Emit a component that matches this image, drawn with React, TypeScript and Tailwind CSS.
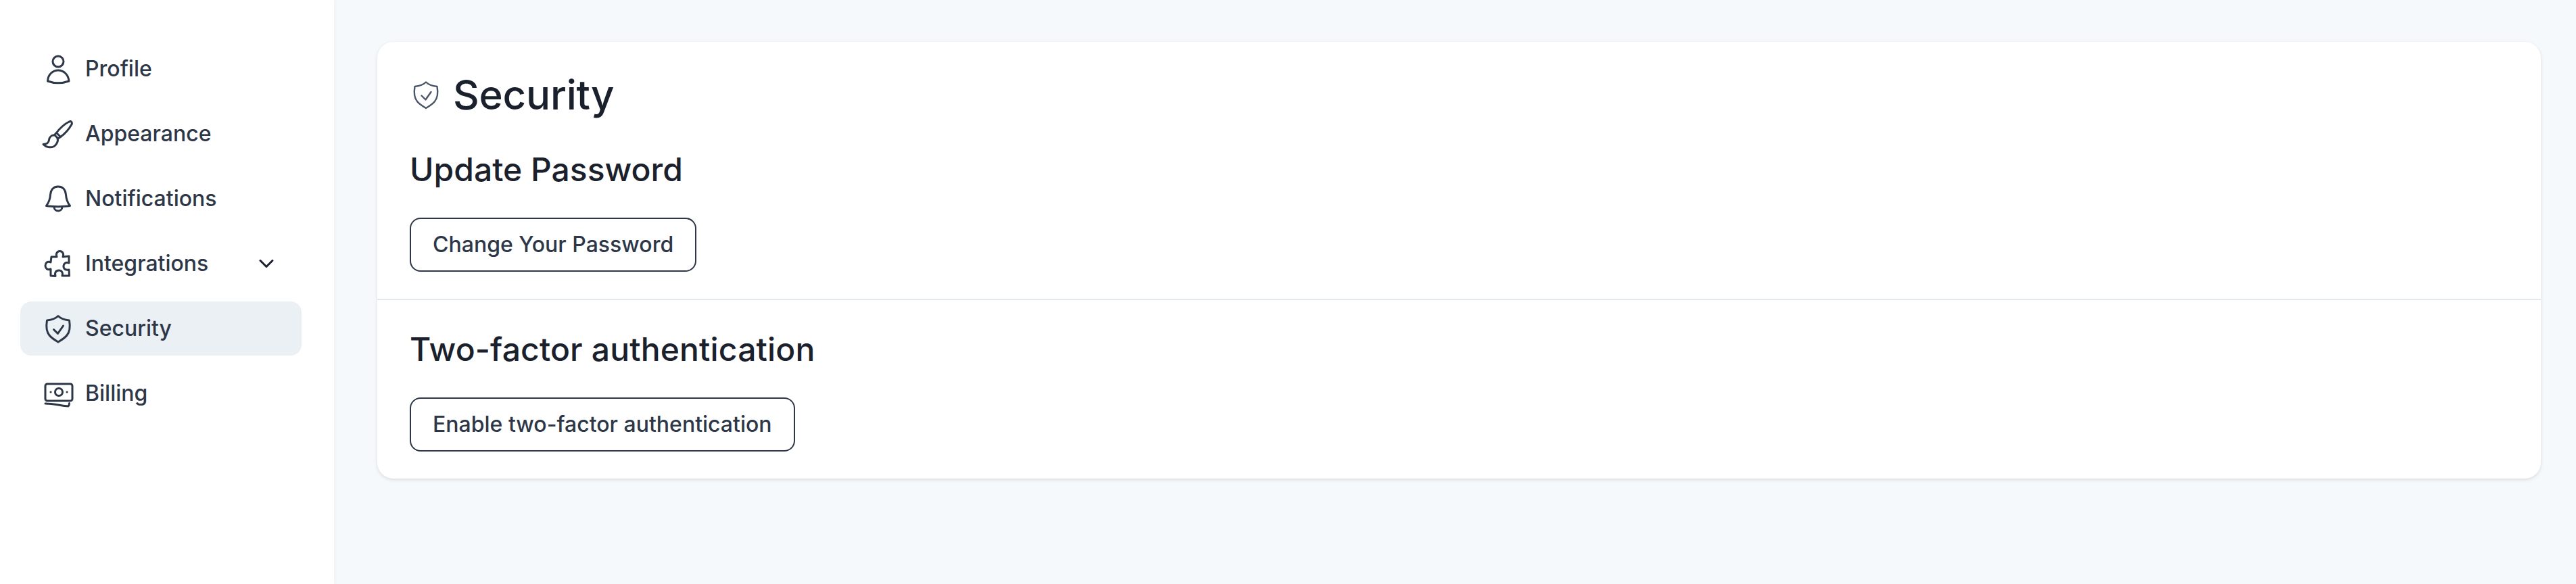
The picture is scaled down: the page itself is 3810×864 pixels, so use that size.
import { ChevronDown } from "lucide-react";
import type { ReactNode } from "react";

const font = { fontFamily: "Inter, sans-serif" };

function Icon({ children, className = "", stroke = 3 }: { children: ReactNode; className?: string; stroke?: number }) {
  return (
    <svg
      viewBox="0 0 40 40"
      fill="none"
      stroke="currentColor"
      strokeWidth={stroke}
      strokeLinecap="round"
      strokeLinejoin="round"
      className={`h-10 w-10 shrink-0 overflow-visible ${className}`}
    >
      {children}
    </svg>
  );
}

const shield = (
  <>
    <path d="M20 1.5C23 4.5 28 7 36.5 8C37.5 14 38 24 33 30C30 34 25 37 20 40C15 37 10 34 7 30C2 24 2.5 14 3.5 8C12 7 17 4.5 20 1.5Z" />
    <path d="M13.5 21.5L19.5 27.5L27.5 16" />
  </>
);

const items = [
  {
    label: "Profile",
    icon: (
      <>
        <circle cx="20" cy="9" r="8" />
        <path d="M4.5 38C5 28 12 22 20 22C28 22 35 28 36 38C26 41.5 14 41.5 4.5 38Z" />
      </>
    ),
  },
  {
    label: "Appearance",
    icon: (
      <>
        <path d="M38.5 1.5C40 2 41 4 40 6C36 13 30 20 23.5 24.5L17.5 18.5C22 12 30 5 35.5 2.5C36.5 2 37.5 1.2 38.5 1.5Z" />
        <path d="M17.5 18.5L14.5 21.5L20 27L23.5 24.5" />
        <path d="M14 22C10 22 7 25 6.5 29C6 33 4 35 -2 35.5C2 40 9 41 14 38.5C18 36 20.5 30 19 27" />
      </>
    ),
  },
  {
    label: "Notifications",
    icon: (
      <>
        <path d="M20 2C12 2 9 8 8.5 14C8 22 6 26 2.5 30.5C12 32 28 32 37.5 30.5C34 26 32 22 31.5 14C31 8 28 2 20 2Z" />
        <path d="M14 32C14 40 26 40 26 32" />
      </>
    ),
  },
  {
    label: "Integrations",
    chevron: true,
    icon: (
      <path d="M10 10H18C16 5 19 1.5 22.5 1.5C26 1.5 29 5 27 10L36 9V19C31 17.5 28 20 28 24C28 28 31 30 36 29L36.5 38L26 38C27.5 33 25 30 21 30C17 30 14.5 33 16 38.5L9 38V28C4 30 1 27 1 23C1 19 4 16 9 18Z" />
    ),
  },
  { label: "Security", active: true, icon: shield },
  {
    label: "Billing",
    icon: (
      <>
        <rect x="1" y="6" width="40" height="25" rx="3" />
        <circle cx="21" cy="18" r="5.5" />
        <path d="M9 18H9.1M33 18H33.1" />
        <path d="M1 35C12 35 24 38 35 39C36 38 36.5 36 36.5 34.5" />
      </>
    ),
  },
];

export default function App() {
  return (
    <div className="flex min-h-screen bg-[#f6f9fc] font-[450] [font-optical-sizing:none]" style={font}>
      <aside className="w-[494px] shrink-0 bg-white px-[30px] pt-[62px] shadow-[2px_0_6px_rgba(0,0,0,0.03)]">
        <nav className="flex w-[416px] flex-col gap-4">
          {items.map((item) => (
            <div
              key={item.label}
              className={`flex h-20 items-center gap-5 rounded-2xl pl-9 pr-[34px] text-[32px] text-[#2d3748] ${item.active ? "bg-[#ebf0f5]" : ""}`}
            >
              <Icon>{item.icon}</Icon>
              <span className="flex-1">{item.label}</span>
              {item.chevron && <ChevronDown size={36} className="text-[#1a202c]" />}
            </div>
          ))}
        </nav>
      </aside>
      <main className="flex-1 pl-16 pr-[52px] pt-[62px]">
        <section className="rounded-3xl bg-white shadow-[0_2px_6px_rgba(0,0,0,0.08),0_2px_4px_rgba(0,0,0,0.04)]">
          <div className="border-b-2 border-[#e2e8f0] px-12 pb-10 pt-[42px]">
            <div className="flex items-center gap-5 text-[60px] leading-[72px] text-[#1a202c]">
              <Icon stroke={2.4} className="ml-1 text-[#4a5568]">{shield}</Icon>
              <h1 className="tracking-[-0.2px]">Security</h1>
            </div>
            <h2 className="mt-[46px] text-[48px] leading-[58px] text-[#1a202c]">Update Password</h2>
            <button className="mt-[42px] h-20 rounded-2xl border-2 border-[#2d3748] px-8 text-[32px] text-[#2d3748]">
              Change Your Password
            </button>
          </div>
          <div className="px-12 pb-10 pt-[44px]">
            <h2 className="text-[48px] leading-[58px] tracking-[0.15px] text-[#1a202c]">Two-factor authentication</h2>
            <button className="mt-[42px] h-20 rounded-2xl border-2 border-[#2d3748] px-8 text-[32px] text-[#2d3748]">
              Enable two-factor authentication
            </button>
          </div>
        </section>
      </main>
    </div>
  );
}
